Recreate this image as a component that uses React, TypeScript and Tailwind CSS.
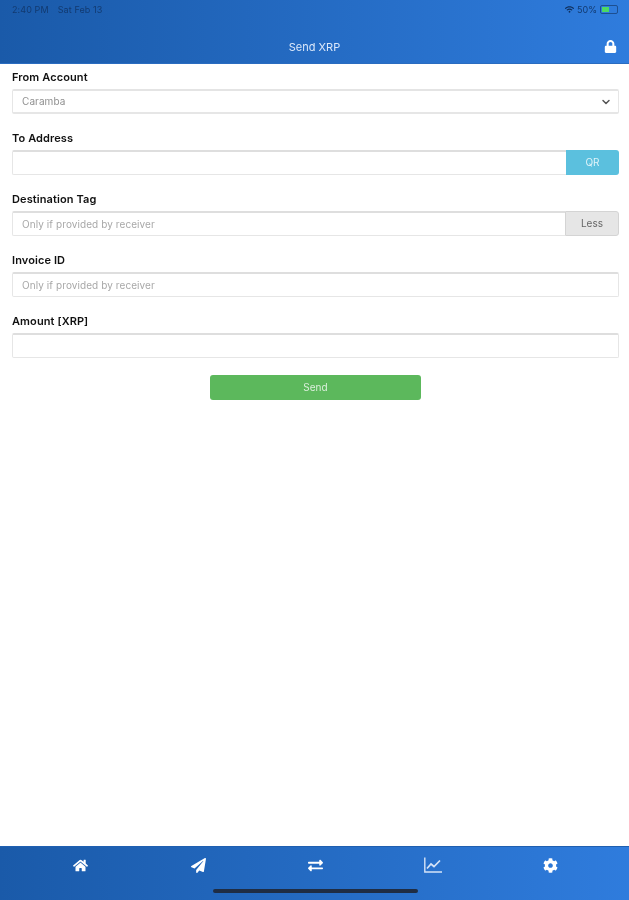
import { ReactNode } from "react"
import { FaHome, FaPaperPlane, FaExchangeAlt, FaCog, FaLock, FaWifi } from "react-icons/fa"
import { ChevronDown } from "lucide-react"

const inputBox = "h-[25px] border border-[#e6e6e6] border-t-2 border-t-[#dedede] bg-white rounded-[2px] flex items-center px-[9px] text-[10px] tracking-[0.08px] text-[#a8a8a8]"

function Field({ label, children }: { label: string; children: ReactNode }) {
  return (
    <div className="h-[61px]">
      <div className="h-[25px] pt-[6px] text-[11px] tracking-[0.1px] leading-[14px] font-semibold text-[#111]">{label}</div>
      {children}
    </div>
  )
}

export default function App() {
  return (
    <div className="w-[629px] h-[900px] flex flex-col bg-white relative blur-[0.4px] font-['Inter','Liberation_Sans',sans-serif]">
      {/* header */}
      <div className="h-[64px] bg-gradient-to-r from-[#1a5aa9] to-[#2f7cdd] border-b border-[#2a6cc0] relative">
        <div className="flex items-center justify-between pl-[12px] pr-[11px] pt-[1px] h-[18px] text-[9px] text-[#123a70]">
          <div className="flex gap-[9px] tracking-[0.1px]">
            <span>2:40 PM</span>
            <span>Sat Feb 13</span>
          </div>
          <div className="flex items-center gap-[3px]">
            <FaWifi size={9} className="text-[#0f2f5c]" />
            <span>50%</span>
            <div className="w-[18px] h-[9px] border border-[#1d4f90] rounded-[2px] p-[1px]">
              <div className="w-[7px] h-full bg-[#4cd964]" />
            </div>
          </div>
        </div>
        <div className="text-center text-[11px] leading-[14px] text-[#dbe8fa] mt-[22px]">Send XRP</div>
        <FaLock size={13} className="absolute right-[12px] top-[40px] text-white" />
      </div>

      {/* form */}
      <div className="flex-1 pl-[12px] pr-[10px]">
        <Field label="From Account">
          <div className={inputBox + " justify-between !border-t-[#e4e4e4] border-b-2 pr-[6px]"}>
            <span className="text-[#8f8f8f]">Caramba</span>
            <ChevronDown size={12} strokeWidth={3} className="text-[#555]" />
          </div>
        </Field>
        <Field label="To Address">
          <div className="flex">
            <div className={inputBox + " flex-1 rounded-r-none border-r-0"} />
            <div className="w-[53px] h-[25px] bg-[#5bc0de] rounded-r-[3px] flex items-center justify-center text-[10px] text-[#dff3f9]">QR</div>
          </div>
        </Field>
        <Field label="Destination Tag">
          <div className="flex">
            <div className={inputBox + " flex-1 rounded-r-none border-r-0"}>Only if provided by receiver</div>
            <div className="w-[54px] h-[25px] bg-[#e6e6e6] border border-[#d4d4d4] rounded-r-[3px] flex items-center justify-center text-[10px] text-[#666]">Less</div>
          </div>
        </Field>
        <Field label="Invoice ID">
          <div className={inputBox}>Only if provided by receiver</div>
        </Field>
        <Field label="Amount [XRP]">
          <div className={inputBox} />
        </Field>
        <div className="flex justify-center">
          <div className="w-[211px] h-[25px] mt-[6px] bg-[#5cb85c] rounded-[3px] flex items-center justify-center text-[10px] text-[#dcefdc]">Send</div>
        </div>
      </div>

      {/* bottom tabs */}
      <div className="h-[54px] bg-gradient-to-r from-[#1a5aa9] to-[#2f7cdd] border-t border-[#1f5fb0] flex pl-[22px] pr-[20px] pt-[11px] items-start text-white">
        <div className="flex-1 flex justify-center"><FaHome size={15} /></div>
        <div className="flex-1 flex justify-center"><FaPaperPlane size={15} /></div>
        <div className="flex-1 flex justify-center"><FaExchangeAlt size={15} /></div>
        <div className="flex-1 flex justify-center">
          <svg width="18" height="16" viewBox="0 0 18 16" fill="none" className="text-[#d5e3f7] -mt-[1px]" stroke="currentColor">
            <path d="M0.8 0.5V15H18" strokeWidth="1.4" />
            <path d="M3 11.5L7 7L10 9.5L16 3.5" strokeWidth="1.7" />
          </svg>
        </div>
        <div className="flex-1 flex justify-center"><FaCog size={15} /></div>
      </div>
      <div className="absolute left-[213px] top-[889px] w-[205px] h-[4px] rounded-full bg-[#1f2d44]" />
    </div>
  )
}
